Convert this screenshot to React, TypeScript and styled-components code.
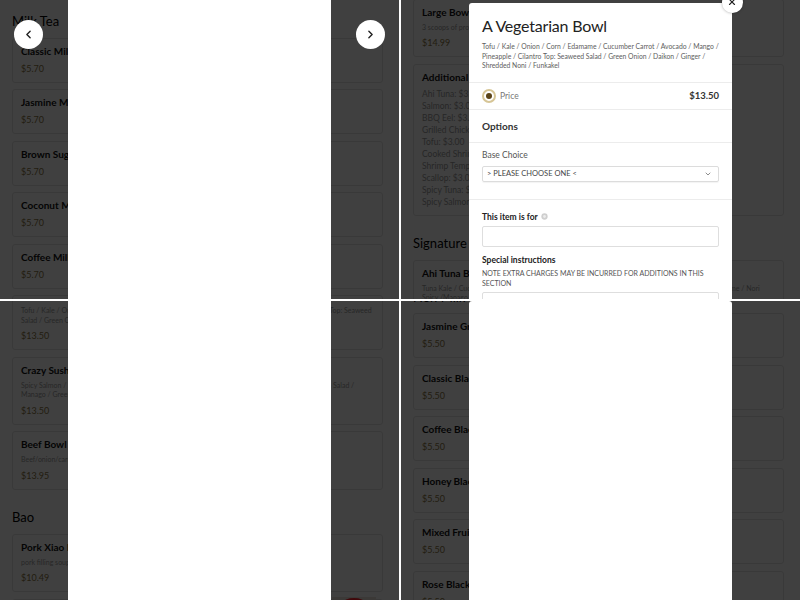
import React from "react";
import styled, { createGlobalStyle } from "styled-components";
import { ChevronLeft, ChevronRight, ChevronDown, X } from "lucide-react";

const GlobalStyle = createGlobalStyle`
  html, body { margin: 0; padding: 0; background: #fff; }
  body { font-family: Lato, "Noto Sans", "DejaVu Sans", sans-serif; }
  * { box-sizing: border-box; }
`;

type Item = { name: string; desc?: string; list?: string[]; price?: string; thumb?: boolean };
type MenuSectionData = { title: string; items: Item[] };

const VEG_DESC =
  "Tofu / Kale / Onion / Corn / Edamame / Cucumber Carrot / Avocado / Mango / Pineapple / Cilantro Top: Seaweed Salad / Green Onion / Daikon / Ginger / Shredded Noni / Funkakel";

const ahiTuna: Item = {
  name: "Ahi Tuna Bowl",
  desc: "Tuna Kale / Cucumber Carrot / Avocado / Mango / Pineapple / Cilantro Top: Seaweed Salad / Edamame / Nori Spicy /Manago / Green Onion / Daikon / Ginger / Furikake",
  price: "$14.50",
};
const vegBowl: Item = { name: "A Vegetarian Bowl", desc: VEG_DESC, price: "$13.50" };

const milkTea: MenuSectionData[] = [
  {
    title: "Milk Tea",
    items: [
      { name: "Classic Milk Tea", price: "$5.70" },
      { name: "Jasmine Milk Tea", price: "$5.70" },
      { name: "Brown Sugar Milk Tea", price: "$5.70" },
      { name: "Coconut Milk Tea", price: "$5.70" },
      { name: "Coffee Milk Tea", price: "$5.70" },
      { name: "Honeydew Milk Tea", price: "$5.70" },
    ],
  },
];

const bowls: MenuSectionData[] = [
  {
    title: "Build Your Own Bowl",
    items: [
      { name: "Regular Bowl", desc: "2 scoops of protein, choice of base and toppings", price: "$12.99" },
      { name: "Large Bowl", desc: "3 scoops of protein, choice of base and toppings", price: "$14.99" },
      {
        name: "Additional Protein",
        list: [
          "Ahi Tuna: $3.00",
          "Salmon: $3.00",
          "BBQ Eel: $3.00",
          "Grilled Chicken: $3.00",
          "Tofu: $3.00",
          "Cooked Shrimp: $3.00",
          "Shrimp Tempura: $3.00",
          "Scallop: $3.00",
          "Spicy Tuna: $3.00",
          "Spicy Salmon: $3.00",
        ],
      },
    ],
  },
  { title: "Signature Bowls", items: [ahiTuna, vegBowl] },
];

const signature: MenuSectionData[] = [
  {
    title: "Signature Bowls",
    items: [
      ahiTuna,
      vegBowl,
      {
        name: "Crazy Sushi Bowl",
        desc: "Spicy Salmon / Spicy Tuna / Kale / Onion / Corn / Cucumber / Crab Meat / Avocado / Edamame / Ika Salad / Manago / Green Onion / Ginger / Sesame / Eel Sauce",
        price: "$13.50",
      },
      { name: "Beef Bowl (Gyudon)", desc: "Beef/onion/carrot/egg/green onion over rice", price: "$13.95" },
    ],
  },
  {
    title: "Bao",
    items: [
      { name: "Pork Xiao Long Bao", desc: "pork filling soup dumplings (6 pcs)", price: "$10.49" },
      { name: "Pork Belly Bao", desc: "braised pork belly, pickles, cilantro", price: "$8.49", thumb: true },
    ],
  },
];

const tea: MenuSectionData[] = [
  {
    title: "Non Milk Tea",
    items: [
      { name: "Jasmine Green Tea", price: "$5.50" },
      { name: "Classic Black Tea", price: "$5.50" },
      { name: "Coffee Black Tea", price: "$5.50" },
      { name: "Honey Black Tea", price: "$5.50" },
      { name: "Mixed Fruit Tea", price: "$5.50" },
      { name: "Rose Black Tea", price: "$5.50" },
    ],
  },
];

/* ---------- layout ---------- */

const Mosaic = styled.main`
  display: grid;
  grid-template-columns: 399px 399px;
  grid-template-rows: 299px 299px;
  gap: 2px;
  width: 800px;
  height: 600px;
  background: #fff;
`;

const Screen = styled.section`
  position: relative;
  overflow: hidden;
  background: #fff;
`;

const Page = styled.div<{ $scroll: number }>`
  display: flex;
  flex-direction: column;
  gap: 18.5px;
  padding: 12px 16px 0 12px;
  margin-top: ${(p) => -p.$scroll}px;
`;

const MenuSection = styled.div`
  display: flex;
  flex-direction: column;
`;

const SectionTitle = styled.h2`
  margin: 0 0 7.5px;
  font-size: 13px;
  line-height: 18px;
  font-weight: 400;
  color: #000;
  white-space: nowrap;
`;

const CardList = styled.div`
  display: flex;
  flex-direction: column;
  gap: 6.5px;
`;

const Card = styled.article`
  display: flex;
  align-items: flex-start;
  gap: 8px;
  border: 1px solid #e4e4e4;
  border-radius: 3px;
  padding: 6px 8px 7px;
  background: #fff;
`;

const CardBody = styled.div`
  flex: 1;
  min-width: 0;
  display: flex;
  flex-direction: column;
  gap: 4px;
`;

const ItemName = styled.h3`
  margin: 0;
  font-size: 10px;
  line-height: 13px;
  font-weight: 700;
  color: #111;
  white-space: nowrap;
`;

const ItemDesc = styled.p<{ $list?: boolean }>`
  margin: 0;
  font-size: ${(p) => (p.$list ? 8.5 : 7)}px;
  line-height: ${(p) => (p.$list ? 12 : 9.5)}px;
  color: #9a9a9a;
`;

const ItemPrice = styled.span`
  font-size: 9px;
  line-height: 13px;
  color: #8a7644;
`;

const Thumb = styled.svg`
  flex: none;
  width: 44px;
  height: 44px;
  margin: -9px -2px 0 0;
  display: block;
`;

const Backdrop = styled.div`
  position: absolute;
  inset: 0;
  background: rgba(0, 0, 0, 0.75);
`;

const Lightbox = styled.div`
  position: absolute;
  top: 0;
  bottom: 0;
  left: 68px;
  width: 263px;
  background: #fff;
`;

const NavButton = styled.button<{ $side: "left" | "right" }>`
  position: absolute;
  top: 20px;
  ${(p) => p.$side}: 14px;
  width: 29px;
  height: 29px;
  border-radius: 50%;
  border: none;
  padding: 0;
  background: #fff;
  color: #222;
  display: flex;
  align-items: center;
  justify-content: center;
`;

/* ---------- modal ---------- */

const Modal = styled.div<{ $top: number }>`
  position: absolute;
  top: ${(p) => p.$top}px;
  left: 68px;
  width: 263px;
  bottom: 0;
  background: #fff;
  border-radius: 3px 3px 0 0;
`;

const CloseButton = styled.button`
  position: absolute;
  top: -11.5px;
  right: -10.5px;
  width: 21px;
  height: 21px;
  border-radius: 50%;
  border: none;
  padding: 0;
  background: #fff;
  color: #222;
  box-shadow: 0 0 3px rgba(0, 0, 0, 0.35);
  display: flex;
  align-items: center;
  justify-content: center;
`;

const ModalHeader = styled.header`
  padding: 12px 13px 11px;
  border-bottom: 1px solid #ececec;
`;

const ModalTitle = styled.h2`
  margin: 0 0 5px;
  font-size: 16px;
  line-height: 22px;
  font-weight: 400;
  letter-spacing: -0.2px;
  color: #222;
`;

const ModalDesc = styled.p`
  margin: 0;
  font-size: 6.8px;
  line-height: 9.5px;
  color: #5e5e5e;
`;

const PriceRow = styled.label`
  display: flex;
  align-items: center;
  height: 27px;
  padding: 0 13px;
  border-bottom: 1px solid #ececec;
`;

const Radio = styled.span`
  width: 14px;
  height: 14px;
  border-radius: 50%;
  border: 2px solid #d6c596;
  background: #fff;
  display: flex;
  align-items: center;
  justify-content: center;
`;

const RadioDot = styled.span`
  width: 6px;
  height: 6px;
  border-radius: 50%;
  background: #5b4419;
`;

const PriceLabel = styled.span`
  flex: 1;
  margin-left: 4px;
  font-size: 8.5px;
  color: #777;
`;

const PriceValue = styled.span`
  font-size: 9.5px;
  font-weight: 700;
  color: #333;
`;

const GroupTitle = styled.h3`
  margin: 0;
  height: 33px;
  padding: 0 13px;
  display: flex;
  align-items: center;
  border-bottom: 1px solid #ececec;
  font-size: 10px;
  font-weight: 700;
  color: #333;
`;

const ChoiceField = styled.div`
  display: flex;
  flex-direction: column;
  gap: 6px;
  padding: 7px 13px 17px;
  border-bottom: 1px solid #ececec;
`;

const ExtrasField = styled.div`
  display: flex;
  flex-direction: column;
  padding: 12px 13px 0;
`;

const FieldLabel = styled.span<{ $strong?: boolean }>`
  display: flex;
  align-items: center;
  gap: 3px;
  font-size: 8.5px;
  line-height: 10px;
  font-weight: ${(p) => (p.$strong ? 700 : 400)};
  color: ${(p) => (p.$strong ? "#222" : "#555")};
`;

const Select = styled.div`
  height: 16px;
  display: flex;
  align-items: center;
  justify-content: space-between;
  padding: 0 6px 0 4px;
  border: 1px solid #dcdcdc;
  border-radius: 2px;
  box-shadow: 0 1px 1px rgba(0, 0, 0, 0.05);
  font-size: 7.5px;
  color: #444;
`;

const TextInput = styled.div`
  height: 21px;
  margin: 4px 0 8px;
  border: 1px solid #dedede;
  border-radius: 2px;
`;

const Note = styled.p`
  margin: 3px 0 4px;
  font-size: 7px;
  line-height: 10px;
  color: #555;
`;

const TextArea = styled.div`
  height: 40px;
  border: 1px solid #dedede;
  border-radius: 2px;
`;

/* ---------- pieces ---------- */

function MenuPage({ sections, scroll }: { sections: MenuSectionData[]; scroll: number }) {
  return (
    <Page $scroll={scroll}>
      {sections.map((s) => (
        <MenuSection key={s.title}>
          <SectionTitle>{s.title}</SectionTitle>
          <CardList>
            {s.items.map((it) => (
              <Card key={it.name}>
                <CardBody>
                  <ItemName>{it.name}</ItemName>
                  {it.desc && <ItemDesc>{it.desc}</ItemDesc>}
                  {it.list && (
                    <ItemDesc $list>
                      {it.list.map((l) => (
                        <React.Fragment key={l}>
                          {l}
                          <br />
                        </React.Fragment>
                      ))}
                    </ItemDesc>
                  )}
                  {it.price && <ItemPrice>{it.price}</ItemPrice>}
                </CardBody>
                {it.thumb && (
                  <Thumb viewBox="0 0 44 44">
                    <rect width="44" height="44" fill="#e9e4dc" />
                    <ellipse cx="22" cy="6" rx="11" ry="5" fill="#ff1f2a" />
                    <ellipse cx="22" cy="20" rx="16" ry="12" fill="#d9232b" />
                  </Thumb>
                )}
              </Card>
            ))}
          </CardList>
        </MenuSection>
      ))}
    </Page>
  );
}

function InfoDot() {
  return (
    <svg width="7" height="7" viewBox="0 0 8 8">
      <circle cx="4" cy="4" r="3.6" fill="#cfcfcf" />
      <circle cx="4" cy="4" r="1.6" fill="#ececec" />
    </svg>
  );
}

export default function App() {
  return (
    <>
      <GlobalStyle />
      <Mosaic>
        <Screen>
          <MenuPage sections={milkTea} scroll={0} />
          <Backdrop />
          <Lightbox />
          <NavButton $side="left" aria-label="Previous">
            <ChevronLeft size={13} strokeWidth={2.6} />
          </NavButton>
          <NavButton $side="right" aria-label="Next">
            <ChevronRight size={13} strokeWidth={2.6} />
          </NavButton>
        </Screen>

        <Screen>
          <MenuPage sections={bowls} scroll={104} />
          <Backdrop />
          <Modal $top={3}>
            <CloseButton aria-label="Close">
              <X size={10} strokeWidth={2.6} />
            </CloseButton>
            <ModalHeader>
              <ModalTitle>A Vegetarian Bowl</ModalTitle>
              <ModalDesc>{VEG_DESC}</ModalDesc>
            </ModalHeader>
            <PriceRow>
              <Radio>
                <RadioDot />
              </Radio>
              <PriceLabel>Price</PriceLabel>
              <PriceValue>$13.50</PriceValue>
            </PriceRow>
            <GroupTitle>Options</GroupTitle>
            <ChoiceField>
              <FieldLabel>Base Choice</FieldLabel>
              <Select>
                <span>&gt; PLEASE CHOOSE ONE &lt;</span>
                <ChevronDown size={8} strokeWidth={2} color="#555" />
              </Select>
            </ChoiceField>
            <ExtrasField>
              <FieldLabel $strong>
                This item is for <InfoDot />
              </FieldLabel>
              <TextInput />
              <FieldLabel $strong>Special instructions</FieldLabel>
              <Note>NOTE EXTRA CHARGES MAY BE INCURRED FOR ADDITIONS IN THIS SECTION</Note>
              <TextArea />
            </ExtrasField>
          </Modal>
        </Screen>

        <Screen>
          <MenuPage sections={signature} scroll={131} />
          <Backdrop />
          <Lightbox />
        </Screen>

        <Screen>
          <MenuPage sections={tea} scroll={25.5} />
          <Backdrop />
          <Modal $top={0} />
        </Screen>
      </Mosaic>
    </>
  );
}
